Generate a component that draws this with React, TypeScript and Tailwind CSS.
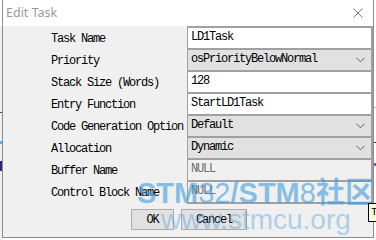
type Row = {
  label: string
  value: string
  kind: 'text' | 'select' | 'disabled'
}

const rows: Row[] = [
  { label: 'Task Name', value: 'LD1Task', kind: 'text' },
  { label: 'Priority', value: 'osPriorityBelowNormal', kind: 'select' },
  { label: 'Stack Size (Words)', value: '128', kind: 'text' },
  { label: 'Entry Function', value: 'StartLD1Task', kind: 'text' },
  { label: 'Code Generation Option', value: 'Default', kind: 'select' },
  { label: 'Allocation', value: 'Dynamic', kind: 'select' },
  { label: 'Buffer Name', value: 'NULL', kind: 'disabled' },
  { label: 'Control Block Name', value: 'NULL', kind: 'disabled' },
]

const mono = "font-['Liberation_Mono','Courier_New',monospace] text-[12px] tracking-[-1.2px]"

function Chevron() {
  return (
    <svg width="9" height="6" viewBox="0 0 9 6" className="shrink-0">
      <path d="M0.5 0.8 L4.5 4.8 L8.5 0.8" fill="none" stroke="#606060" strokeWidth="1" />
    </svg>
  )
}

function ValueCell({ row }: { row: Row }) {
  const bg =
    row.kind === 'text' ? 'bg-white' : row.kind === 'select' ? 'bg-[#e1e1e1]' : 'bg-[#f0f0f0]'
  const color = row.kind === 'disabled' ? 'text-[#6d6d6d]' : 'text-black'
  return (
    <div
      className={`flex-1 h-[22px] flex items-center justify-between pl-[3px] pr-[6px] border-l border-r-2 border-b-2 border-[#a0a0a0] ${bg} ${color}`}
    >
      <span className="pb-[2px]">{row.value}</span>
      {row.kind === 'select' && <Chevron />}
    </div>
  )
}

function EditTaskDialog() {
  return (
    <div className="w-[372px] h-[238px] shrink-0 bg-[#f0f0f0] border-x border-b border-[#8c8c8c] flex flex-col">
      <div className="h-[26px] bg-white flex items-center justify-between pl-[3px] pr-[10px]">
        <span className="font-['Noto_Sans',sans-serif] text-[12.5px] text-[#9a9a9a]">Edit Task</span>
        <svg width="10" height="10" viewBox="0 0 10 10">
          <path d="M0.5 0.5 L9.5 9.5 M9.5 0.5 L0.5 9.5" stroke="#7a7a7a" strokeWidth="1" />
        </svg>
      </div>

      <div className={`flex flex-col ${mono}`}>
        <div className="ml-[184px] h-[2px] bg-[#a0a0a0]" />
        {rows.map((row) => (
          <div key={row.label} className="flex">
            <div className="w-[184px] h-[22px] pl-[48px] flex items-center text-black">{row.label}</div>
            <ValueCell row={row} />
          </div>
        ))}
      </div>

      <div className={`mt-[5px] flex justify-center gap-[7px] pl-[2px] ${mono} text-black`}>
        <button className="w-[43px] h-[21px] bg-[#e1e1e1] border border-[#adadad]">OK</button>
        <button className="w-[66px] h-[21px] bg-[#e1e1e1] border border-[#adadad]">Cancel</button>
      </div>
    </div>
  )
}

export default function App() {
  return (
    <div className="relative w-[376px] h-[240px] overflow-hidden bg-white flex">
      <div className="w-[2px] shrink-0 flex flex-col">
        <div className="h-[26px] bg-white" />
        <div className="h-[86px] bg-[#f0f0f0]" />
        <div className="h-[1px] bg-[#555]" />
        <div className="h-[28px] bg-[#f0f0f0]" />
        <div className="h-[3px] bg-[#5ab0e6]" />
        <div className="h-[17px] bg-[#f0f0f0]" />
        <div className="h-[10px] bg-[#3a1f6e]" />
        <div className="flex-1 bg-[#f0f0f0]" />
      </div>

      <EditTaskDialog />

      <div className="flex-1 flex flex-col bg-white">
        <div className="h-[107px]" />
        <div className="h-[1px] bg-[#bbb]" />
        <div className="h-[34px]" />
        <div className="h-[1px] bg-[#333]" />
        <div className="h-[20px]" />
        <div className="h-[3px] bg-[#3b6fd6]" />
      </div>

      {/* site watermark over the dialog */}
      <div className="pointer-events-none absolute left-[137px] top-[179px] font-['Liberation_Sans','Noto_Sans_CJK_SC',sans-serif] text-[29px] leading-none text-[#3d9bdc]/60 whitespace-nowrap">
        <span className="font-bold">STM</span>
        <span>32</span>
        <span className="font-bold">/STM</span>
        <span>8</span>
        <span className="font-bold">社区</span>
      </div>
      <div className="pointer-events-none absolute left-[161px] top-[206px] font-['Liberation_Sans',sans-serif] text-[28px] leading-none text-[#3d9bdc]/40 whitespace-nowrap">
        www.stmcu.org
      </div>

      <div className="absolute left-[368px] top-[203px] w-[14px] h-[19px] bg-[#ffffe1] border border-black pl-[2px] text-[11px] font-['Liberation_Mono',monospace]">
        T
      </div>
    </div>
  )
}
